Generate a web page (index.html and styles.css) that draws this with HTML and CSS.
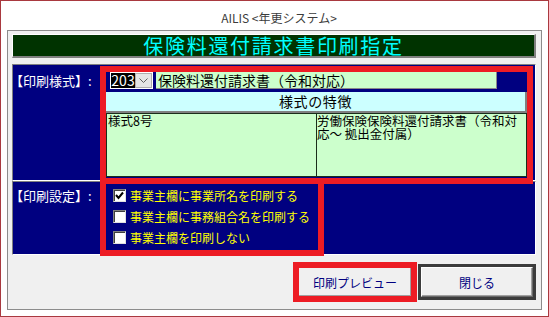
FILE: index.html
```html
<!DOCTYPE html>
<html lang="ja">
<head>
<meta charset="utf-8">
<title>保険料還付請求書印刷指定</title>
<link rel="stylesheet" href="styles.css">
</head>
<body>
<div class="window">
    <div class="titlebar">AILIS &lt;年更システム&gt;</div>
    <div class="client">
        <div class="header">保険料還付請求書印刷指定</div>

        <div class="panel style-panel">
            <div class="label">【印刷様式】:</div>
            <div class="style-body">
                <div class="select-row">
                    <div class="combo">
                        <span class="combo-value">203</span>
                        <span class="combo-btn">
                            <svg width="9" height="6" viewBox="0 0 9 6"><polyline points="0.5,0.5 4.5,4.5 8.5,0.5" fill="none" stroke="#606060" stroke-width="1"/></svg>
                        </span>
                    </div>
                    <div class="style-name">保険料還付請求書（令和対応）</div>
                </div>
                <div class="feature-head">様式の特徴</div>
                <div class="feature-table">
                    <div class="cell">様式8号</div>
                    <div class="cell">労働保険保険料還付請求書（令和対<br>応～ 拠出金付属）</div>
                </div>
            </div>
        </div>

        <div class="panel setting-panel">
            <div class="label">【印刷設定】:</div>
            <div class="options">
                <div class="option">
                    <span class="check"><svg width="11" height="11" viewBox="0 0 11 11"><polyline points="2,5 4.5,8 9,2.5" fill="none" stroke="#000" stroke-width="2"/></svg></span>
                    事業主欄に事業所名を印刷する
                </div>
                <div class="option"><span class="check"></span>事業主欄に事務組合名を印刷する</div>
                <div class="option"><span class="check"></span>事業主欄を印刷しない</div>
            </div>
        </div>

        <div class="buttons">
            <button class="btn preview">印刷プレビュー</button>
            <button class="btn close">閉じる</button>
        </div>
    </div>

    <!-- 赤枠の注釈 -->
    <div class="mark mark-style"></div>
    <div class="mark mark-setting"></div>
    <div class="mark mark-preview"></div>
</div>
</body>
</html>
```

FILE: styles.css
```css
*{
    box-sizing: border-box;
}
body{
    margin: 0;
}
.window{
    position: relative;
    width: 549px;
    height: 317px;
    border: 1px solid #a9393f;
    background: #fff;
    font-family: "Noto Sans CJK JP", sans-serif;
    overflow: hidden;
}
.titlebar{
    height: 29px;
    padding: 9px 0 0 9px;
    text-align: center;
    font-size: 12px;
    line-height: 15px;
    color: #3c3c3c;
}
.client{
    margin-left: 6px;
    width: 535px;
    height: 280px;
    border: 1px solid #8c8c8c;
    background: #f0f0f0;
    padding: 3px 5px 0 4px;
}
.header{
    height: 24px;
    background: #003300;
    border-style: solid;
    border-width: 1px 2px 2px 1px;
    border-color: #fff #808080 #808080 #fff;
    color: #00ffff;
    font-size: 20px;
    line-height: 21px;
    letter-spacing: 1.7px;
    text-align: center;
}

.panel{
    display: grid;
    grid-template-columns: 93px 421px;
    background: #000080;
    border: 1px solid;
    border-color: #808080 #fff #fff #808080;
}
.style-panel{
    margin-top: 6px;
    height: 117px;
    padding: 7px 0 2px;
}
.setting-panel{
    height: 74px;
    padding-top: 3px;
}
.label{
    color: #fff;
    font-size: 13px;
    line-height: 17px;
    text-indent: -3px;
    white-space: nowrap;
}
.setting-panel .label{
    line-height: 21px;
}

.select-row{
    display: flex;
    height: 17px;
    padding-left: 4px;
}
.combo{
    display: flex;
    width: 43px;
    height: 17px;
    background: #fff;
    padding: 1px;
}
.combo-value{
    width: 24px;
    background: #000;
    color: #fff;
    font-size: 14px;
    line-height: 15px;
    text-align: center;
}
.combo-btn{
    width: 17px;
    background: #e5e5e5;
    border: 1px solid #adadad;
    display: flex;
    align-items: center;
    justify-content: center;
}
.style-name{
    margin-left: 3px;
    width: 341px;
    background: #ccffcc;
    border-right: 1px solid #8a8a8a;
    border-bottom: 1px solid #8a8a8a;
    padding-left: 2px;
    font-size: 14px;
    line-height: 16px;
    white-space: nowrap;
}
.feature-head{
    margin-top: 3px;
    height: 21px;
    background: #ccffff;
    border-right: 2px solid #808080;
    border-bottom: 2px solid #808080;
    text-align: center;
    font-size: 14px;
    line-height: 19px;
    letter-spacing: 0.6px;
}
.feature-table{
    display: grid;
    grid-template-columns: 209px 1fr;
    height: 64px;
    background: #ccffcc;
    border: 1px solid #1a2e1a;
    font-size: 12.5px;
    line-height: 13px;
}
.cell{
    white-space: nowrap;
    padding-left: 1px;
}
.cell + .cell{
    border-left: 1px solid #1a2e1a;
    padding-left: 0;
}

.options{
    padding-left: 7px;
}
.option{
    display: flex;
    align-items: center;
    height: 21px;
    color: #ffff00;
    font-size: 12px;
    white-space: nowrap;
}
.check{
    display: flex;
    align-items: center;
    justify-content: center;
    width: 13px;
    height: 13px;
    margin-right: 4px;
    background: #fff;
    border: 1px solid;
    border-color: #808080 #e0e0e0 #e0e0e0 #808080;
    box-shadow: inset 1px 1px #404040;
}

.buttons{
    display: flex;
    justify-content: flex-end;
    gap: 9px;
    margin-top: 12px;
    padding-right: 3px;
}
.btn{
    height: 30px;
    padding: 0;
    background: #f0f0f0;
    border: 1px solid;
    border-color: #fff #696969 #696969 #fff;
    box-shadow: inset -1px -1px #a0a0a0;
    font-family: "Noto Sans CJK JP", sans-serif;
    font-size: 12px;
    color: #000080;
}
.preview{
    width: 114px;
}
.close{
    width: 112px;
    box-shadow: inset -1px -1px #a0a0a0, 0 0 0 3px #3c3c3c;
}

.mark{
    position: absolute;
    border: 6px solid #ed1c24;
    pointer-events: none;
}
.mark-style{
    left: 99px;
    top: 65px;
    width: 433px;
    height: 118px;
}
.mark-setting{
    left: 99px;
    top: 177px;
    width: 224px;
    height: 78px;
}
.mark-preview{
    left: 292px;
    top: 261px;
    width: 124px;
    height: 40px;
}
```
